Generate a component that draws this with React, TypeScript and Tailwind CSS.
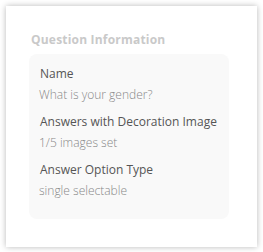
const rows = [
  { label: "Name", value: "What is your gender?" },
  { label: "Answers with Decoration Image", value: "1/5 images set" },
  { label: "Answer Option Type", value: "single selectable" },
];

export default function App() {
  return (
    <div className="w-[263px] h-[252px] bg-white p-[6px] font-['Open_Sans',sans-serif]">
      <div className="w-[251px] h-[241px] bg-white shadow-[0_0_6px_rgba(0,0,0,0.28)] px-[23px] pt-[25px]">
        <h2 className="pl-[2px] text-[12px] leading-[18px] font-bold text-[#c9c9c9] tracking-[0.2px]">
          Question Information
        </h2>
        <div className="mt-[5px] w-[200px] h-[165px] rounded-[8px] bg-[#f9f9f9] pl-[11px] pt-[11px] flex flex-col gap-[9px]">
          {rows.map((r) => (
            <div key={r.label} className="flex flex-col gap-[3px]">
              <span className="text-[12px] leading-[18px] text-[#555555] whitespace-nowrap">{r.label}</span>
              <span className="-ml-[1px] text-[12px] leading-[18px] font-light text-[#888888]">{r.value}</span>
            </div>
          ))}
        </div>
      </div>
    </div>
  );
}
